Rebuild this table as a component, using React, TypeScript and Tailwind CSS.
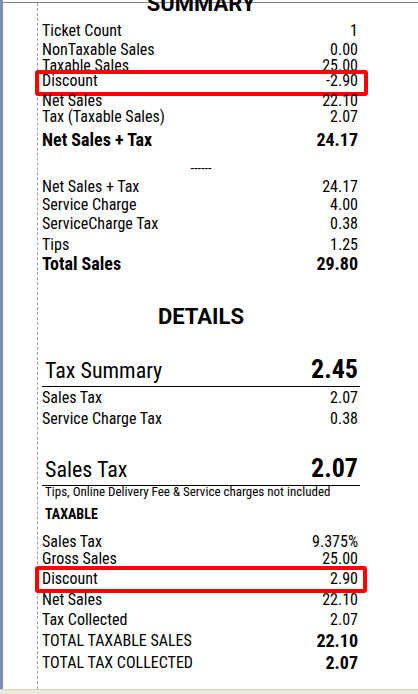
import type { ReactNode } from "react";

type Line = { label: string; value: string; mt: string; bold?: boolean; boxed?: "a" | "b" };

const summaryTop: Line[] = [
  { label: "Ticket Count", value: "1", mt: "mt-[7px]" },
  { label: "NonTaxable Sales", value: "0.00", mt: "mt-[1px]" },
  { label: "Taxable Sales", value: "25.00", mt: "-mt-[2px]" },
  { label: "Discount", value: "-2.90", mt: "-mt-[3px]", boxed: "a" },
  { label: "Net Sales", value: "22.10", mt: "mt-[2px]" },
  { label: "Tax (Taxable Sales)", value: "2.07", mt: "-mt-[2px]" },
  { label: "Net Sales + Tax", value: "24.17", mt: "mt-[5px]", bold: true },
];

const summaryBottom: Line[] = [
  { label: "Net Sales + Tax", value: "24.17", mt: "mt-[3px]" },
  { label: "Service Charge", value: "4.00", mt: "mt-0" },
  { label: "ServiceCharge Tax", value: "0.38", mt: "mt-[1px]" },
  { label: "Tips", value: "1.25", mt: "mt-[3px]" },
  { label: "Total Sales", value: "29.80", mt: "mt-[1px]", bold: true },
];

const taxable: Line[] = [
  { label: "Sales Tax", value: "9.375%", mt: "mt-[12px]" },
  { label: "Gross Sales", value: "25.00", mt: "-mt-[1px]" },
  { label: "Discount", value: "2.90", mt: "mt-[2px]", boxed: "b" },
  { label: "Net Sales", value: "22.10", mt: "mt-[3px]" },
  { label: "Tax Collected", value: "2.07", mt: "mt-[2px]" },
];

function Row({ line }: { line: Line }) {
  return (
    <div
      className={`relative flex h-[18px] items-center justify-between pr-[2px] leading-[18px] ${line.mt} ${
        line.bold ? "text-[18px] font-bold" : "text-[16px]"
      }`}
    >
      <span>{line.label}</span>
      <span>{line.value}</span>
      {line.boxed === "a" && (
        <div className="absolute -top-[2px] -right-[8px] -bottom-[6px] -left-[7px] rounded-[3px] border-[4px] border-[#ff0000]" />
      )}
      {line.boxed === "b" && (
        <div className="absolute -top-[4px] -right-[7px] -bottom-[5px] -left-[7px] rounded-[3px] border-[4px] border-[#ff0000]" />
      )}
    </div>
  );
}

function BigHeader({ label, value, mt }: { label: string; value: string; mt: string }) {
  return (
    <div className={`flex items-baseline justify-between border-b border-black pr-[2px] pb-[2px] pl-[3px] leading-[26px] ${mt}`}>
      <span className="text-[22px]">{label}</span>
      <span className="text-[26px] font-bold">{value}</span>
    </div>
  );
}

function Heading({ children, mt }: { children: ReactNode; mt: string }) {
  return (
    <div className={`text-center font-['Roboto',sans-serif] text-[22px] leading-[22px] font-bold ${mt}`}>
      {children}
    </div>
  );
}

function TotalRow({ label, value, mt }: { label: string; value: string; mt: string }) {
  return (
    <div className={`flex h-[18px] items-center justify-between pr-[2px] text-[16px] leading-[18px] ${mt}`}>
      <span>{label}</span>
      <span className="text-[18px] font-bold">{value}</span>
    </div>
  );
}

export default function App() {
  return (
    <div className="flex h-[694px] w-[418px] flex-col overflow-hidden bg-white font-['Roboto_Condensed',Roboto,sans-serif] text-black">
      <div className="flex min-h-0 flex-1">
        <div className="w-[3px] bg-[#7b8fb5]" />
        <div className="flex min-w-0 flex-1 flex-col pt-[2px]">
          <div className="flex min-h-0 flex-1 border-t border-[#808080]">
            <div className="w-[35px] border-r border-dashed border-[#a0a0a0]" />
            <div className="w-[322px] pl-[4px]">
              <Heading mt="-mt-[10px]">SUMMARY</Heading>
              {summaryTop.map((l) => (
                <Row key={l.label + l.value} line={l} />
              ))}
              <div className="mt-[12px] text-center text-[14px] leading-[14px]">------</div>
              {summaryBottom.map((l) => (
                <Row key={l.label + l.value} line={l} />
              ))}

              <Heading mt="mt-[33px]">DETAILS</Heading>

              <BigHeader label="Tax Summary" value="2.45" mt="mt-[28px]" />
              <Row line={{ label: "Sales Tax", value: "2.07", mt: "mt-[2px]" }} />
              <Row line={{ label: "Service Charge Tax", value: "0.38", mt: "mt-[3px]" }} />

              <BigHeader label="Sales Tax" value="2.07" mt="mt-[27px]" />
              <div className="-mt-[1px] pl-[3px] text-[13px] leading-[13px]">
                Tips, Online Delivery Fee &amp; Service charges not included
              </div>
              <div className="mt-[9px] pl-[3px] text-[14px] leading-[14px] font-bold">TAXABLE</div>

              {taxable.map((l) => (
                <Row key={l.label + l.value} line={l} />
              ))}
              <TotalRow label="TOTAL TAXABLE SALES" value="22.10" mt="mt-[3px]" />
              <TotalRow label="TOTAL TAX COLLECTED" value="2.07" mt="mt-[4px]" />
            </div>
          </div>
        </div>
      </div>
      <div className="h-[5px] border-t border-[#d8d2c0] bg-[#ece9d8]" />
    </div>
  );
}
